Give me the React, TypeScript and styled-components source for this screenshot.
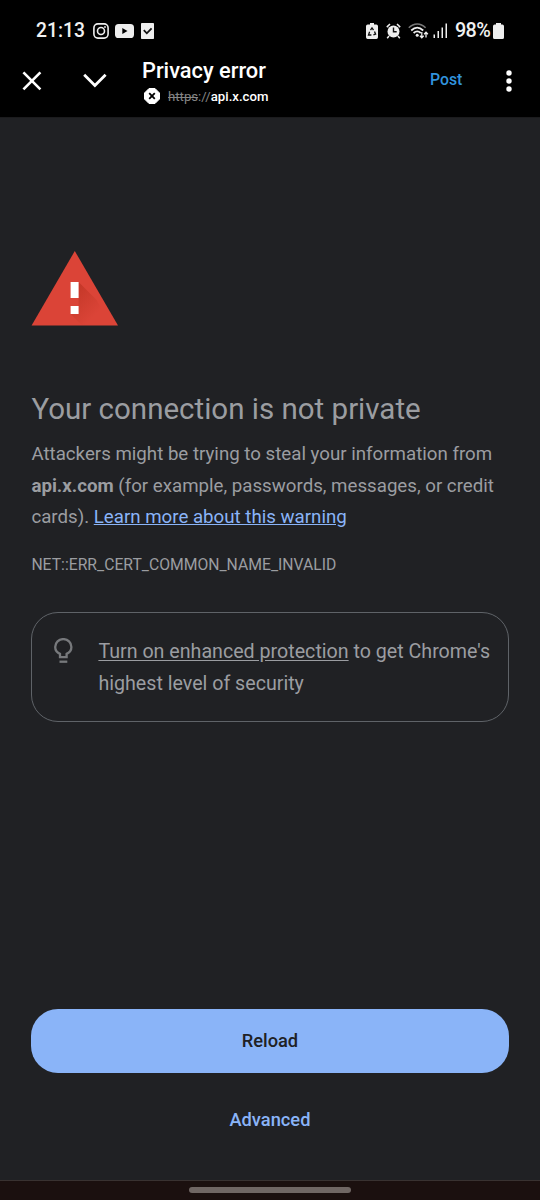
import React from 'react';
import styled, { createGlobalStyle } from 'styled-components';

const GlobalStyle = createGlobalStyle`
  * { box-sizing: border-box; }
  body { margin: 0; background: #202124; }
`;

const Screen = styled.div`
  width: 540px;
  height: 1200px;
  display: flex;
  flex-direction: column;
  overflow: hidden;
  background: #202124;
  color: #9b9da1;
  font-family: Roboto, 'Liberation Sans', sans-serif;
`;

const StatusBar = styled.div`
  height: 56px;
  flex: none;
  padding: 5px 36px 0 36px;
  display: flex;
  align-items: center;
  justify-content: space-between;
  background: #000;
  color: #f1f1f1;
`;

const StatusGroup = styled.div`
  display: flex;
  align-items: center;
  svg { display: block; flex: none; }
`;

const StatusText = styled.span<{ $size: number; $spacing?: number }>`
  font-size: ${(p) => p.$size}px;
  line-height: 24px;
  font-weight: 500;
  letter-spacing: ${(p) => p.$spacing ?? 0}px;
`;

const Gap = styled.span<{ $w: number }>`
  width: ${(p) => p.$w}px;
  flex: none;
`;

const Toolbar = styled.header`
  height: 62px;
  flex: none;
  display: flex;
  align-items: flex-start;
  background: #000;
  border-bottom: 1px solid #1b1b1d;
  color: #fff;
`;

const IconButton = styled.button<{ $left: number; $top: number }>`
  margin: ${(p) => p.$top}px 0 0 ${(p) => p.$left}px;
  padding: 0;
  border: 0;
  background: none;
  color: #fff;
  flex: none;
  svg { display: block; }
`;

const PageInfo = styled.div`
  margin-left: 35px;
  width: 260px;
`;

const PageTitle = styled.div`
  font-size: 21.8px;
  line-height: 29px;
  font-weight: 500;
  white-space: nowrap;
`;

const Origin = styled.div`
  display: flex;
  align-items: center;
  height: 20px;
  margin: 1px 0 0 2px;
  font-size: 13.2px;
  font-weight: 500;
  svg { display: block; margin-right: 8px; }
`;

const Scheme = styled.span`
  color: #858585;
  font-weight: 400;
  s { text-decoration-thickness: 1px; }
`;

const PostButton = styled.button`
  margin: 14px 0 0 28px;
  padding: 0;
  border: 0;
  background: none;
  color: #3193dd;
  font: 500 15.8px/20px Roboto, sans-serif;
`;

const Content = styled.main`
  flex: 1;
  display: flex;
  flex-direction: column;
  padding: 133px 31.5px 0 31.4px;
`;

const WarningIcon = styled.svg`
  display: block;
  width: 87px;
  height: 75px;
`;

const Heading = styled.h1`
  margin: 64px 0 0;
  font-size: 29.5px;
  line-height: 38px;
  font-weight: 400;
  white-space: nowrap;
`;

const Message = styled.p`
  margin: 11px -12px 0 0;
  font-size: 18.7px;
  line-height: 31.7px;
`;

const LearnMore = styled.a`
  color: #8ab4f8;
  text-decoration: underline;
`;

const ErrorCode = styled.div`
  margin-top: 19px;
  font-size: 15.74px;
  line-height: 24px;
`;

const Promo = styled.section`
  margin-top: 35px;
  height: 110px;
  display: flex;
  padding: 23px 0 0 22px;
  border: 1px solid #5f6368;
  border-radius: 27px;
  svg { flex: none; margin-top: 2px; }
`;

const PromoText = styled.p`
  margin: 0 0 0 25px;
  font-size: 19.65px;
  line-height: 31.7px;
  white-space: nowrap;
  u { text-underline-offset: 2px; }
`;

const Actions = styled.div`
  margin-top: auto;
  padding-bottom: 45px;
`;

const Button = styled.button<{ $primary?: boolean }>`
  display: block;
  width: 100%;
  height: ${(p) => (p.$primary ? 64 : 31)}px;
  margin-top: ${(p) => (p.$primary ? 0 : 31)}px;
  padding: 0;
  border: 0;
  border-radius: 27px;
  background: ${(p) => (p.$primary ? '#8ab4f8' : 'transparent')};
  color: ${(p) => (p.$primary ? '#202124' : '#8ab4f8')};
  font: 500 18.3px/30px Roboto, sans-serif;
`;

const NavBar = styled.footer`
  height: 20px;
  flex: none;
  display: flex;
  justify-content: center;
  padding-top: 6px;
  background: #1b100f;
  border-top: 1px solid #393231;
`;

const Handle = styled.div`
  width: 162px;
  height: 6px;
  border-radius: 3px;
  background: #706764;
`;

const InstagramIcon = () => (
  <svg width="16" height="16" viewBox="0 0 16 16" fill="none" stroke="#eee" strokeWidth="1.6">
    <rect x="0.9" y="0.9" width="14.2" height="14.2" rx="4" />
    <circle cx="8" cy="8" r="3.5" />
    <circle cx="12" cy="4" r="0.9" fill="#eee" stroke="none" />
  </svg>
);

const YoutubeIcon = () => (
  <svg width="19" height="14" viewBox="0 0 19 14">
    <rect width="19" height="14" rx="3.6" fill="#eee" />
    <path d="M7.3 4v6l5.2-3z" fill="#000" />
  </svg>
);

const TaskIcon = () => (
  <svg width="13" height="16" viewBox="0 0 13 16">
    <rect width="13" height="16" rx="0.8" fill="#eee" />
    <path d="M2.8 7.2l3 3.1 4.8-5" fill="none" stroke="#111" strokeWidth="1.8" />
  </svg>
);

const BatterySaverIcon = () => (
  <svg width="12" height="16" viewBox="0 0 12 16">
    <path d="M4 0h4v1.6h2.3Q12 1.6 12 3.3v11Q12 16 10.3 16H1.7Q0 16 0 14.3v-11Q0 1.6 1.7 1.6H4z" fill="#eee" />
    <path d="M4.5 7.1L6 4.9l1.5 2.2M8.5 8.5l1.1 2.7-2.2.7M5.4 12H2.5l1.1-3.2" fill="none" stroke="#111" strokeWidth="1.3" />
  </svg>
);

const AlarmIcon = () => (
  <svg width="15" height="16" viewBox="0 0 15 16">
    <path d="M.8 4.1L4 1M14.2 4.1L11 1M3 13l-1.8 2.3M12 13l1.8 2.3" stroke="#eee" strokeWidth="1.5" fill="none" />
    <circle cx="7.5" cy="8.4" r="6" fill="#eee" />
    <path d="M7.5 4.5v4.2h3.2" fill="none" stroke="#111" strokeWidth="1.4" />
  </svg>
);

const WifiIcon = () => (
  <svg width="21" height="16" viewBox="0 0 21 16" fill="none">
    <path d="M.8 4.8Q4.6 1 9.2 1t8.4 3.8" stroke="#777" strokeWidth="1.6" />
    <path d="M3.2 7.5Q9.2 1.8 15.2 7.5M5.6 10q3.6-3.3 7.2 0" stroke="#eee" strokeWidth="1.8" />
    <circle cx="9.2" cy="12.2" r="1.5" fill="#eee" />
    <path d="M13.8 9v5.5M11.9 12.8l1.9 2 1.9-2M18 14.5V9.3M16.1 11.2l1.9-2 1.9 2" stroke="#eee" strokeWidth="1.3" />
  </svg>
);

const SignalIcon = () => (
  <svg width="15" height="15" viewBox="0 0 15 15" fill="#eee">
    <rect x="0.5" y="11.5" width="1.5" height="3.5" />
    <rect x="4.5" y="8" width="1.5" height="7" />
    <rect x="8.5" y="4.5" width="1.5" height="10.5" />
    <rect x="12.5" y="0.5" width="1.5" height="14.5" />
  </svg>
);

const BatteryIcon = () => (
  <svg width="11" height="16" viewBox="0 0 11 16">
    <path d="M3 0h5v1.6h1.4Q11 1.6 11 3.2v11.2Q11 16 9.4 16H1.6Q0 16 0 14.4V3.2Q0 1.6 1.6 1.6H3z" fill="#eee" />
  </svg>
);

export default function App() {
  return (
    <Screen>
      <GlobalStyle />
      <StatusBar>
        <StatusGroup>
          <StatusText $size={19.3}>21:13</StatusText>
          <Gap $w={7.7} />
          <InstagramIcon />
          <Gap $w={6} />
          <YoutubeIcon />
          <Gap $w={7.5} />
          <TaskIcon />
        </StatusGroup>
        <StatusGroup>
          <BatterySaverIcon />
          <Gap $w={8} />
          <AlarmIcon />
          <Gap $w={7} />
          <WifiIcon />
          <Gap $w={4} />
          <SignalIcon />
          <Gap $w={7} />
          <StatusText $size={19.8} $spacing={-0.7}>98%</StatusText>
          <Gap $w={3} />
          <BatteryIcon />
        </StatusGroup>
      </StatusBar>

      <Toolbar>
        <IconButton $left={22} $top={15} aria-label="Close">
          <svg width="20" height="20" viewBox="0 0 20 20" fill="none" stroke="currentColor" strokeWidth="2.6">
            <path d="M1.4 1.4l17 17M18.4 1.4l-17 17" />
          </svg>
        </IconButton>
        <IconButton $left={41} $top={17} aria-label="Minimize">
          <svg width="24" height="16" viewBox="0 0 24 16" fill="none" stroke="currentColor" strokeWidth="2.8">
            <path d="M1.2 1.8l10.7 10.7L22.6 1.8" />
          </svg>
        </IconButton>
        <PageInfo>
          <PageTitle>Privacy error</PageTitle>
          <Origin>
            <svg width="16" height="16" viewBox="0 0 16 16">
              <path d="M5 .5h6L15.5 5v6L11 15.5H5L.5 11V5z" fill="#fff" stroke="#fff" strokeLinejoin="round" />
              <path d="M5.2 5.2l5.6 5.6M10.8 5.2l-5.6 5.6" stroke="#000" strokeWidth="1.8" />
            </svg>
            <Scheme><s>https</s>://</Scheme>
            api.x.com
          </Origin>
        </PageInfo>
        <PostButton>Post</PostButton>
        <IconButton $left={43.8} $top={14} aria-label="More options">
          <svg width="6" height="22" viewBox="0 0 6 22" fill="currentColor">
            <circle cx="3" cy="3" r="2.7" />
            <circle cx="3" cy="11" r="2.7" />
            <circle cx="3" cy="19" r="2.7" />
          </svg>
        </IconButton>
      </Toolbar>

      <Content>
        <WarningIcon viewBox="0 0 87 75">
          <defs>
            <linearGradient id="shade" gradientUnits="userSpaceOnUse" x1="44" y1="40" x2="66" y2="62">
              <stop offset="0" stopColor="#a52714" stopOpacity="0.4" />
              <stop offset="1" stopColor="#a52714" stopOpacity="0" />
            </linearGradient>
          </defs>
          <path d="M43.8 0L87 74.5H.6z" fill="#db4437" />
          <path d="M47.6 31l18 18 15 25.5H51L39.6 63l8-8v-8z" fill="url(#shade)" />
          <path d="M39.6 31h8v16h-8zM39.6 55h8v8h-8z" fill="#fff" />
        </WarningIcon>
        <Heading>Your connection is not private</Heading>
        <Message>
          Attackers might be trying to steal your information from
          <br />
          <strong>api.x.com</strong> (for example, passwords, messages, or credit
          <br />
          cards). <LearnMore>Learn more about this warning</LearnMore>
        </Message>
        <ErrorCode>NET::ERR_CERT_COMMON_NAME_INVALID</ErrorCode>
        <Promo>
          <svg width="19" height="26" viewBox="0 0 19 26" fill="none" stroke="#77797c" strokeWidth="2.3">
            <path d="M6 19.2v-3.3Q1.2 13.6 1.2 8.9a8.1 7.8 0 0 1 16.2 0q0 4.7-4.8 7v3.3z" />
            <path d="M5.5 23.7h7.8" />
          </svg>
          <PromoText>
            <u>Turn on enhanced protection</u> to get Chrome's
            <br />
            highest level of security
          </PromoText>
        </Promo>
        <Actions>
          <Button $primary>Reload</Button>
          <Button>Advanced</Button>
        </Actions>
      </Content>

      <NavBar>
        <Handle />
      </NavBar>
    </Screen>
  );
}
